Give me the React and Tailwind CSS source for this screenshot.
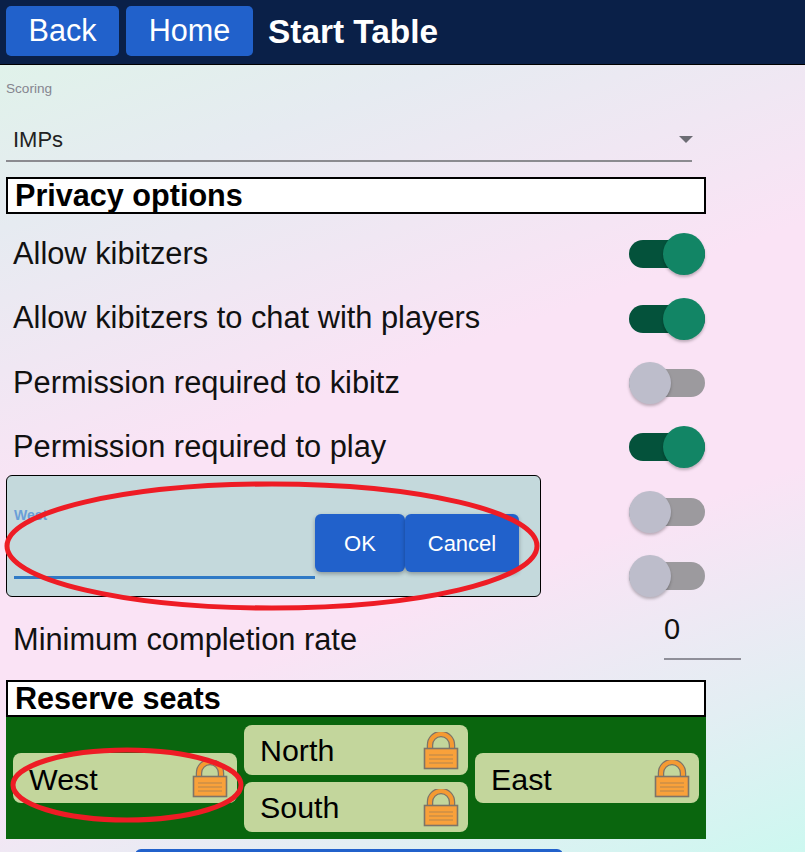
import { useState } from "react";

const Lock = () => (
  <svg width="36" height="38" viewBox="0 0 36 38" className="shrink-0">
    <path d="M7 20V13a11 11 0 0 1 22 0v7" fill="none" stroke="#7d7468" strokeWidth="6.5" />
    <path d="M7 20V13a11 11 0 0 1 22 0v7" fill="none" stroke="#f59a32" strokeWidth="4" />
    <rect x="1.5" y="16.5" width="33" height="20" fill="#f9a13a" stroke="#7d7468" strokeWidth="1.6" />
    <path d="M6 23h24M6 27h24M6 31h24" stroke="#b5854c" strokeWidth="1" />
  </svg>
);

const Toggle = ({ on }) => (
  <div className="relative h-[28px] w-[76px] shrink-0">
    <div className={`absolute inset-x-0 top-0 h-[28px] rounded-full ${on ? "bg-[#04523b]" : "bg-[#9c9a9e]"}`} />
    <div
      className={`absolute top-[-7px] h-[42px] w-[42px] rounded-full shadow-[0_2px_3px_rgba(0,0,0,0.25)] ${
        on ? "right-0 bg-[#128565]" : "left-0 bg-[#bdbdcb]"
      }`}
    />
  </div>
);

const SectionTitle = ({ children, className }) => (
  <div className={`w-[700px] border-2 border-black bg-white pl-[7px] text-[30.6px] leading-[33px] font-bold text-black ${className}`}>
    {children}
  </div>
);

const OptionRow = ({ label, on }) => (
  <div className="flex h-[64.4px] w-[699px] items-center justify-between pl-[7px]">
    <span className="text-[30.8px] text-[#111]">{label}</span>
    <Toggle on={on} />
  </div>
);

const Seat = ({ name }) => (
  <div className="flex h-[50px] w-[224px] items-center justify-between rounded-[8px] bg-[#c3d69c] pr-[9px] pl-[16px] text-[30.4px] text-black">
    <span className="pt-[2px]">{name}</span>
    <div className="mt-[2px]">
      <Lock />
    </div>
  </div>
);

const HeaderButton = ({ children, className }) => (
  <button className={`h-[50px] rounded-[5px] bg-[#2161cb] text-[30.6px] text-white ${className}`}>{children}</button>
);

export default function App() {
  const [scoring] = useState("IMPs");

  return (
    <div className="relative h-[852px] w-[805px] overflow-hidden bg-[linear-gradient(160deg,#e0f2ea_6%,#e6ebf1_20%,#fae3f5_45%,#fae3f5_66%,#e3eef3_85%,#cdf8f0_100%)] font-['Liberation_Sans',Arial,sans-serif]">
      <header className="flex h-[65px] items-center gap-[7px] border-b border-black bg-[#0a2048] pb-[3px] pl-[6px]">
        <HeaderButton className="w-[113px]">Back</HeaderButton>
        <HeaderButton className="w-[127px]">Home</HeaderButton>
        <h1 className="mt-[3px] ml-[8px] text-[33.4px] font-bold text-white">Start Table</h1>
      </header>

      <main className="pl-[6px]">
        <div className="pt-[16px] text-[13.6px] leading-[15px] text-[#85858f]">Scoring</div>
        <div className="mt-[22px] flex h-[44px] w-[686px] items-center justify-between border-b-2 border-[#8b8b90] pl-[7px]">
          <span className="text-[22px] text-[#222]">{scoring}</span>
          <span className="mr-[-1px] h-0 w-0 border-x-[7px] border-t-[7px] border-x-transparent border-t-[#6c6c74]" />
        </div>

        <SectionTitle className="mt-[15px]">Privacy options</SectionTitle>
        <div className="mt-[8px]">
          <OptionRow label="Allow kibitzers" on />
          <OptionRow label="Allow kibitzers to chat with players" on />
          <OptionRow label="Permission required to kibitz" />
          <OptionRow label="Permission required to play" on />
          <OptionRow label="" />
          <OptionRow label="" />
        </div>
        <div className="flex h-[66px] items-start pl-[7px]">
          <span className="mt-[9px] text-[30.8px] text-[#111]">Minimum completion rate</span>
          <div className="ml-[307px] h-[52px] w-[77px] border-b-2 border-[#8f8f99] text-[29px] text-[#111]">0</div>
        </div>

        <SectionTitle className="mt-[6px]">Reserve seats</SectionTitle>
        <div className="flex h-[122px] w-[700px] items-center justify-between bg-[#0a660e] px-[7px]">
          <Seat name="West" />
          <div className="flex flex-col gap-[7px]">
            <Seat name="North" />
            <Seat name="South" />
          </div>
          <Seat name="East" />
        </div>
        <div className="mt-[10px] ml-[129px] h-[20px] w-[428px] rounded-[6px] bg-[#2161cb]" />
      </main>

      <div className="absolute top-[475px] left-[6px] flex h-[122px] w-[535px] rounded-[6px] border border-black bg-[#c4d9dc]">
        <div className="relative ml-[7px] h-[103px] w-[301px] border-b-[3px] border-[#2f7ac6]">
          <span className="absolute top-[29px] left-0 text-[14px] font-bold text-[#6a9ed8]">West</span>
        </div>
        <button className="mt-[38px] h-[58px] w-[90px] rounded-[6px] bg-[#2161cb] text-[22px] text-white shadow-[0_2px_4px_rgba(0,0,0,0.3)]">OK</button>
        <button className="mt-[38px] h-[58px] w-[114px] rounded-[6px] bg-[#2161cb] text-[22px] text-white shadow-[0_2px_4px_rgba(0,0,0,0.3)]">Cancel</button>
      </div>

      <svg className="pointer-events-none absolute inset-0" width="805" height="852">
        <ellipse cx="272" cy="546" rx="265" ry="62" fill="none" stroke="#ee1c25" strokeWidth="5" />
        <ellipse cx="127" cy="785" rx="114" ry="35" fill="none" stroke="#ee1c25" strokeWidth="5" />
      </svg>
    </div>
  );
}
